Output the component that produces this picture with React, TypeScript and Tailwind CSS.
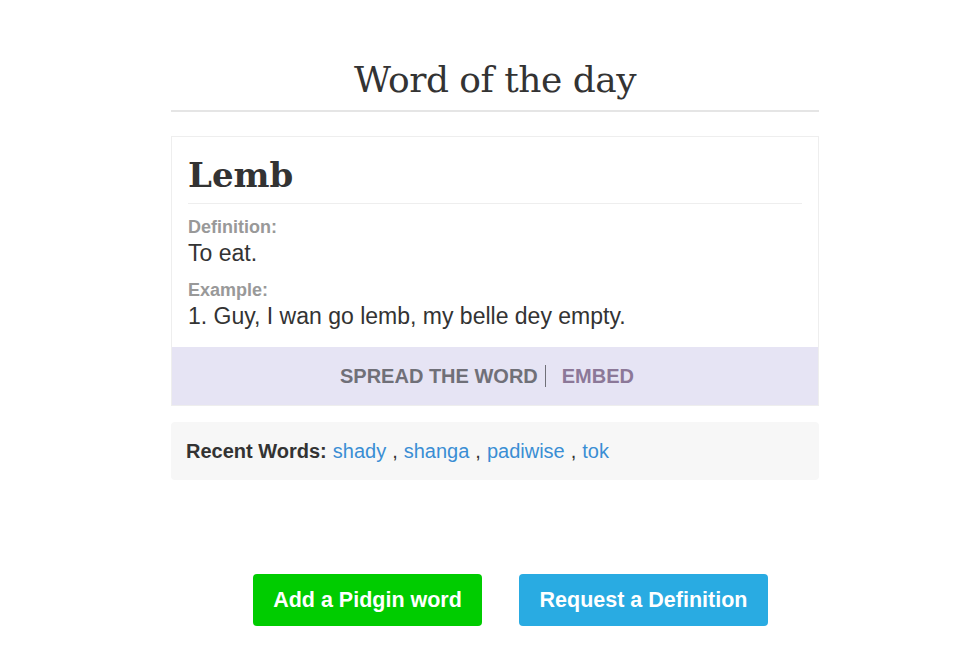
export default function App() {
  const recent = ['shady', 'shanga', 'padiwise', 'tok']
  return (
    <div className="min-h-screen bg-white font-['Liberation_Sans',Arial,sans-serif]">
      <div className="ml-[171px] w-[648px] pt-[56px]">
        <h1 className="text-center text-[36px] leading-[48px] text-[#333] font-['DejaVu_Serif',Georgia,serif] tracking-[-0.5px] pb-[6px] border-b-2 border-[#e5e5e5]">
          Word of the day
        </h1>

        <div className="mt-[24px] border border-[#eeeeee]">
          <div className="px-[16px] pt-[14px]">
            <h2 className="text-[34px] leading-[48px] font-bold text-[#333] font-['DejaVu_Serif',Georgia,serif] pb-[4px] border-b border-[#eeeeee]">
              Lemb
            </h2>
            <div className="pt-[12px] pb-[15px]">
              <div className="text-[18px] leading-[22px] font-bold text-[#999]">Definition:</div>
              <div className="text-[23px] leading-[30px] text-[#333]">To eat.</div>
              <div className="mt-[11px] text-[18px] leading-[22px] font-bold text-[#999]">Example:</div>
              <div className="text-[23px] leading-[31px] text-[#333]">1. Guy, I wan go lemb, my belle dey empty.</div>
            </div>
          </div>
          <div className="h-[58px] bg-[#e6e4f4] flex items-center justify-center pr-[16px] text-[20px] font-bold">
            <span className="text-[#707078]">SPREAD THE WORD</span>
            <span className="ml-[7px] w-px h-[22px] bg-[#707078]" />
            <span className="ml-[16px] text-[#8c7898]">EMBED</span>
          </div>
        </div>

        <div className="mt-[16px] h-[58px] rounded bg-[#f7f7f7] px-[15px] flex items-center text-[20px]">
          <span className="font-bold text-[#333] mr-[6px]">Recent Words:</span>
          {recent.map((w, i) => (
            <span key={w} className="text-[#333]">
              <a href="#" className="text-[#3a8ed4]">{w}</a>
              {i < recent.length - 1 && <span className="ml-[6px] mr-[6px]">,</span>}
            </span>
          ))}
        </div>
      </div>

      <div className="ml-[253px] mt-[94px] flex gap-[37px]">
        <button className="w-[229px] h-[52px] rounded bg-[#00cc00] text-white text-[21.5px] font-bold">
          Add a Pidgin word
        </button>
        <button className="w-[249px] h-[52px] rounded bg-[#29abe2] text-white text-[21.5px] font-bold">
          Request a Definition
        </button>
      </div>
    </div>
  )
}
